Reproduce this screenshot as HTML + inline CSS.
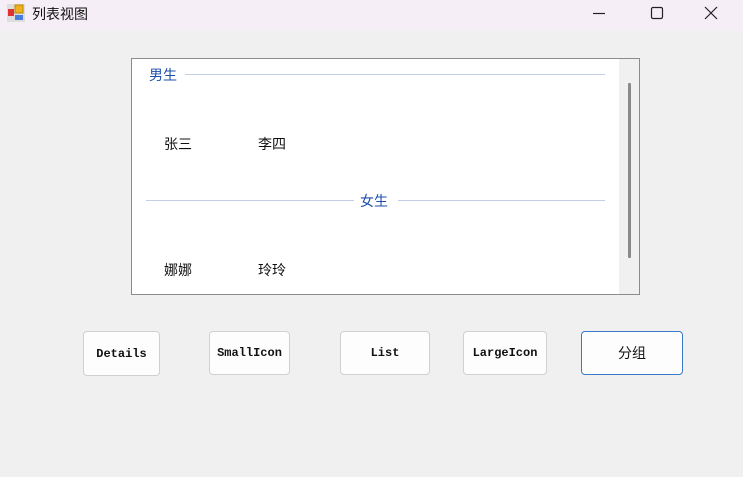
<!DOCTYPE html>
<html><head><meta charset="utf-8"><style>
body{margin:0;width:743px;height:477px;background:#f0f0f0;position:relative;overflow:hidden;font-family:"Liberation Sans","Noto Sans CJK SC",sans-serif;}
.tb{position:absolute;left:0;top:0;width:743px;height:31px;background:#f6eef6;}
.t{position:absolute;left:32px;top:4px;font-size:14px;color:#111;}
.lv{position:absolute;left:131px;top:58px;width:507px;height:235px;border:1px solid #8c8c8c;background:#fff;}
.sb{position:absolute;left:487px;top:0;width:20px;height:235px;background:#f0f0f0;}
.th{position:absolute;left:9px;top:24px;width:3px;height:175px;background:#8a8a8a;border-radius:1px;}
.g{position:absolute;font-size:14px;color:#1e4fa8;}
.ln{position:absolute;height:1px;background:#c2cfe3;}
.it{position:absolute;font-size:14px;color:#111;}
.b{position:absolute;background:#fdfdfd;border:1px solid #d0d0d0;border-radius:4px;font-family:"Liberation Mono","Noto Sans CJK SC",monospace;font-size:12px;font-weight:bold;display:flex;align-items:center;justify-content:center;color:#111;box-sizing:border-box;}
</style></head><body>
<div class="tb">
<svg style="position:absolute;left:7px;top:4px" width="18" height="18"><rect x="0" y="0" width="18" height="18" fill="#ddd"/><rect x="1" y="5" width="6" height="7" fill="#d33"/><rect x="8" y="1" width="8" height="8" fill="#f0b020" stroke="#b80" stroke-width="1"/><rect x="8" y="11" width="8" height="5" fill="#4a7de0"/></svg>
<div class="t">列表视图</div>
<svg style="position:absolute;left:590px;top:6px" width="140" height="16" fill="none" stroke="#222" stroke-width="1.2"><line x1="3" y1="7.5" x2="15" y2="7.5"/><rect x="61.5" y="1.5" width="11" height="11" rx="1.5"/><line x1="115" y1="1" x2="127" y2="13"/><line x1="127" y1="1" x2="115" y2="13"/></svg>
</div>
<div class="lv">
<div class="g" style="left:17px;top:6px">男生</div>
<div class="ln" style="left:53px;top:15px;width:420px"></div>
<div class="it" style="left:32px;top:75px">张三</div>
<div class="it" style="left:126px;top:75px">李四</div>
<div class="ln" style="left:14px;top:141px;width:208px"></div>
<div class="g" style="left:228px;top:132px">女生</div>
<div class="ln" style="left:266px;top:141px;width:207px"></div>
<div class="it" style="left:32px;top:201px">娜娜</div>
<div class="it" style="left:126px;top:201px">玲玲</div>
<div class="sb"><div class="th"></div></div>
</div>
<div class="b" style="left:83px;top:331px;width:77px;height:45px">Details</div>
<div class="b" style="left:209px;top:331px;width:81px;height:44px">SmallIcon</div>
<div class="b" style="left:340px;top:331px;width:90px;height:44px">List</div>
<div class="b" style="left:463px;top:331px;width:84px;height:44px">LargeIcon</div>
<div class="b" style="left:581px;top:331px;width:102px;height:44px;border-color:#3a78c8;font-family:'Liberation Sans','Noto Sans CJK SC',sans-serif;font-size:14px;font-weight:normal">分组</div>
</body></html>
